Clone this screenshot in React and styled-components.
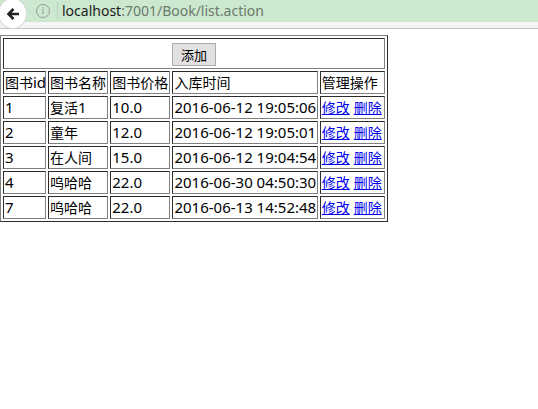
import React from "react"
import styled, { createGlobalStyle } from "styled-components"

const GlobalStyle = createGlobalStyle`
  html, body {
    margin: 0;
    padding: 0;
    background: #fff;
  }
  body {
    font-family: "Noto Sans", "Noto Sans CJK SC", sans-serif;
  }
`

const books = [
  { id: 1, name: "复活1", price: "10.0", time: "2016-06-12 19:05:06" },
  { id: 2, name: "童年", price: "12.0", time: "2016-06-12 19:05:01" },
  { id: 3, name: "在人间", price: "15.0", time: "2016-06-12 19:04:54" },
  { id: 4, name: "呜哈哈", price: "22.0", time: "2016-06-30 04:50:30" },
  { id: 7, name: "呜哈哈", price: "22.0", time: "2016-06-13 14:52:48" },
]

const headers = ["图书id", "图书名称", "图书价格", "入库时间", "管理操作"]

// chinese runs are set a little smaller than the latin text, like the YaHei page
const mixed = (text) =>
  String(text)
    .split(/([\u4e00-\u9fff]+)/)
    .filter(Boolean)
    .map((part, i) => (/[\u4e00-\u9fff]/.test(part) ? <Han key={i}>{part}</Han> : part))

const App = () => {
  return (
    <>
      <GlobalStyle />
      <Chrome>
        <BackButton>
          <svg width="16" height="16" viewBox="0 0 16 16">
            <path d="M14 8H4M8.5 3L3.5 8l5 5" fill="none" stroke="#222" strokeWidth="2.6" />
          </svg>
        </BackButton>
        <InfoIcon>i</InfoIcon>
        <Divider />
        <Url>
          <Host>localhost</Host>:7001/Book/list.action
        </Url>
      </Chrome>
      <Page>
        <Table>
          <colgroup>
            <col width="43" />
            <col width="60" />
            <col width="60" />
            <col width="145" />
            <col width="65" />
          </colgroup>
          <tbody>
            <tr>
              <ButtonCell colSpan={5}>
                <AddButton>添加</AddButton>
              </ButtonCell>
            </tr>
            <tr>
              {headers.map((h) => (
                <Cell key={h}>{mixed(h)}</Cell>
              ))}
            </tr>
            {books.map((b) => (
              <tr key={b.id}>
                <Cell>{b.id}</Cell>
                <Cell>{mixed(b.name)}</Cell>
                <Cell>{b.price}</Cell>
                <Cell>{b.time}</Cell>
                <Cell>
                  <Link href="#"><Han>修改</Han></Link> <Link href="#"><Han>删除</Han></Link>
                </Cell>
              </tr>
            ))}
          </tbody>
        </Table>
      </Page>
    </>
  )
}

const Chrome = styled.div`
  display: flex;
  align-items: flex-start;
  height: 28px;
  background: linear-gradient(#cce8cf 0, #cce8cf 22px, #f5f5f5 22px);
  border-bottom: 1px solid #c4c4c4;
`

const BackButton = styled.div`
  width: 27px;
  height: 29px;
  margin-left: -2px;
  margin-top: -2px;
  border-radius: 50%;
  background: #fff;
  border: 1px solid #d8d8d8;
  display: flex;
  align-items: center;
  justify-content: center;
  flex-shrink: 0;
  position: relative;
  z-index: 1;
`

const InfoIcon = styled.div`
  width: 12px;
  height: 12px;
  margin: 4px 0 0 9px;
  border: 1px solid #9a9a9a;
  border-radius: 50%;
  color: #9a9a9a;
  font-family: "Liberation Serif", serif;
  font-size: 10px;
  line-height: 12px;
  text-align: center;
`

const Divider = styled.div`
  width: 1px;
  height: 17px;
  margin: 2px 0 0 7px;
  background: #b8d4ba;
`

const Url = styled.div`
  margin: 0 0 0 4px;
  font-family: "Noto Sans", sans-serif;
  font-size: 14px;
  line-height: 21px;
  color: #6b7a6c;
`

const Host = styled.span`
  color: #1e1e1e;
`

const Page = styled.div`
  padding-top: 6px;
`

const Table = styled.table`
  border: 1px outset grey;
  border-spacing: 2px;
  width: 388px;
  table-layout: fixed;
  font-size: 15px;
  color: #000;
`

const Han = styled.span`
  font-family: "Noto Sans CJK SC", sans-serif;
  font-size: 14px;
`

const Cell = styled.td`
  border: 1px inset grey;
  padding: 1px;
  line-height: 19px;
  height: 19px;
  white-space: nowrap;
  overflow: hidden;
`

const ButtonCell = styled(Cell)`
  text-align: center;
  height: 26px;
  padding-top: 2px;
`

const AddButton = styled.button`
  font-family: "Noto Sans CJK SC", sans-serif;
  font-size: 13px;
  height: 23px;
  padding: 0 8px;
  background: #e1e1e1;
  border: 1px solid #adadad;
  color: #000;
  vertical-align: middle;
`

const Link = styled.a`
  color: #0000ee;
  text-decoration: underline;
`

export default App
